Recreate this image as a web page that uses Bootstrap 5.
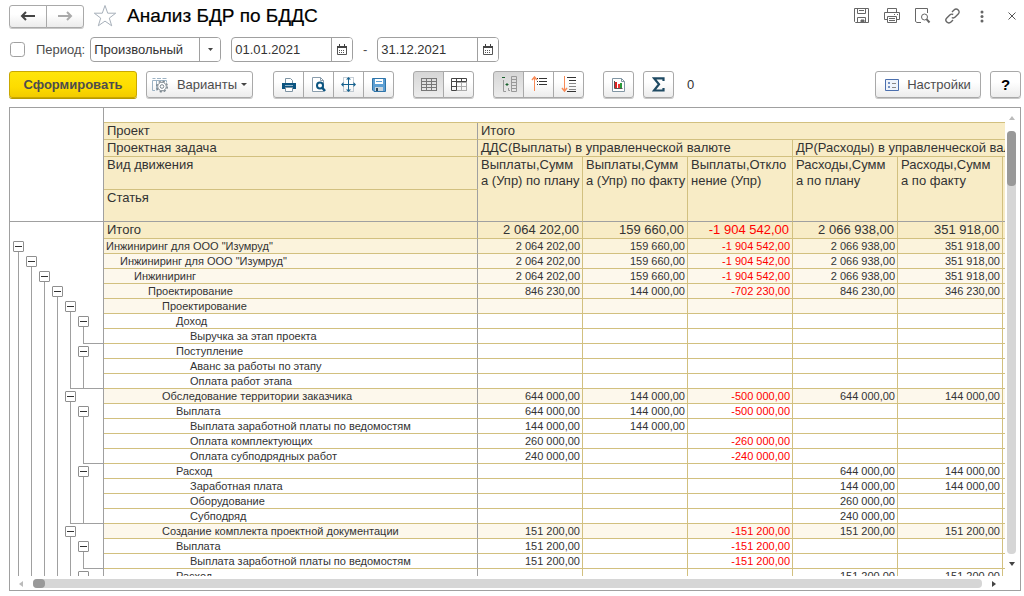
<!DOCTYPE html>
<html lang="ru">
<head>
<meta charset="utf-8">
<meta name="viewport" content="width=device-width, initial-scale=1">
<title>Анализ БДР по БДДС</title>
<link href="https://cdn.jsdelivr.net/npm/bootstrap@5.3.0/dist/css/bootstrap.min.css" rel="stylesheet">
<style>
  :root { --line: #a0a0a0; --sand: #d2c07f; --head: #f8ecc6; --lvl1: #fbf3dc; --lvl2: #fdf8ec; }
  body { font-family: "Liberation Sans", Arial, sans-serif; font-size: 13px; line-height: 16px; color: #4d4d4d; background: #fff; }
  svg { display: block; flex: none; }
  svg:not([fill]) { fill: none; }
  h1 { font-size: 19px; line-height: 24px; color: #000; margin: 0 0 0 7px; -webkit-text-stroke: .2px #000; }

  .title-row { padding: 4px 8px 0 9px; }
  .period-row { padding: 9px 3px 0 10px; }
  .tool-row { padding: 9px 3px 0 9px; }
  .frame-wrap { padding: 9px 3px 5px 9px; min-height: 0; }

  .tool { --bs-btn-color: #4d4d4d; --bs-btn-font-size: 13px; --bs-btn-line-height: 16px; --bs-btn-padding-x: 0; --bs-btn-padding-y: 0;
    --bs-btn-border-color: #a9a9a9; --bs-btn-border-radius: 3px; --bs-btn-hover-border-color: #8c8c8c; --bs-btn-hover-bg: #f0f0f0;
    display: inline-flex; align-items: center; justify-content: center; height: 27px; min-width: 31px;
    background: linear-gradient(#fff 40%, #ececec); box-shadow: 0 1px 0 #c8c8c8; }
  .btn-group > .tool { flex: none; }
  .tool.pressed { background: linear-gradient(#d6d6d6, #ececec); }
  .tool-wide { padding: 0 6px; }
  .tool-main { width: 128px; font-weight: bold; --bs-btn-border-color: #c9a800; background: linear-gradient(#ffe50a, #fddc00 60%, #f2cb00); box-shadow: 0 1px 0 #b79a00; }
  .nav-tool { width: 38px; height: 23px; }
  .plain { border: 0; background: none; padding: 0; width: 30px; display: flex; justify-content: center; }
  .star { margin-left: 6px; }
  .plain.close-tool { width: 8px; margin-left: 11px; }
  .variants { margin-left: 9px; width: 107px; }
  .set { margin-left: 20px; } .set + .set { margin-left: 19px; }
  .sum { margin-left: 9px; } .sum-value { margin-left: 13px; color: #333; }
  .settings { width: 106px; }
  .help { margin-left: 9px; color: #000; font-weight: bold; font-size: 15px; }

  .field { height: 25px; border: 1px solid var(--line); border-radius: 4px; background: #fff; overflow: hidden; }
  .field input, .field select { border: 0; outline: 0; background: none; appearance: none; padding: 0 0 0 3px; color: #333; width: 0; height: 23px; }
  .field .side { flex: none; width: 21px; border: 0; border-left: 1px solid var(--line); background: #fff; padding: 0; display: flex; align-items: center; justify-content: center; }
  .w-period { width: 131px; margin-left: 5px; } .w-date { width: 122px; }
  .date-from { margin-left: 10px; } .dash { width: 24px; text-align: center; }
  .tick { width: 15px; height: 15px; margin: 0; border: 1px solid var(--line); border-radius: 2px; }
  .tick-label { margin-left: 11px; }

  .report { border: 1px solid var(--line); }
  .sheet { table-layout: fixed; width: 1100px; border-collapse: separate; border-spacing: 0; color: #333; }
  .sheet th, .sheet td { padding: 0 3px; font-weight: normal; vertical-align: top; white-space: nowrap; border-right: 1px solid var(--sand); border-bottom: 1px solid var(--sand); }
  .sheet thead th { background: var(--head); line-height: 16px; }
  .sheet thead .gap-cell { background: #fff; border-right: 0; height: 15px; }
  .sheet .name, .sheet .gutter, .sheet thead .corner { border-right-color: var(--line); }
  .sheet thead .corner { background: #fff; border-bottom-color: var(--line); }
  .sheet .edge { border-bottom-color: var(--line); }
  .h-one { height: 17px; } .h-two { height: 33px; } .h-last { height: 32px; }
  .sheet tbody td, .sheet tbody th { font-size: 11px; line-height: 14px; }
  .sheet tbody .total td, .sheet tbody .total th { background: var(--head); font-size: 13px; line-height: 16px; }
  .sheet tbody .total .gutter { background: #fff; }
  .sheet tbody td.num { text-align: right; padding-right: 2px; }
  .sheet tbody .total td.num { padding-right: 3px; }
  .sheet .neg { color: #f00; }
  .sheet .l1 .name, .sheet .l1 .num { background: var(--lvl1); }
  .sheet .l2 .name, .sheet .l2 .num { background: var(--lvl2); }
  .sheet tbody .gutter { padding: 0 0 0 8px; border-bottom: 0; }
  .tree { display: flex; height: 15px; }
  .tree span { width: 13px; height: 15px; }
  .tree span:last-child { flex: 1; }
  .tree .run { background: linear-gradient(var(--line), var(--line)) left top / 1px 100% no-repeat; }
  .tree .open { background: linear-gradient(var(--line), var(--line)) left bottom / 1px 3px no-repeat; }
  .tree .shut { border-bottom: 1px solid var(--line); }
  .tree button { display: block; width: 11px; height: 11px; margin: 2px 0 0 -5px; padding: 0; border: 1px solid #8f8f8f; border-radius: 1px; background: linear-gradient(#333, #333) center / 7px 1px no-repeat, #fff; }

  .vbar { width: 15px; padding: 8px 4px 9px 2px; }
  .hbar { height: 14px; padding: 3px 24px 2px 9px; }
  .track { background: #d6d6d6; border-radius: 4px; }
  .thumb { background: #999; border-radius: 4px; }
  .vbar .track { width: 9px; margin: 10px 0 8px; } .vbar .thumb { height: 55px; }
  .hbar .track { height: 9px; margin: 0 10px; } .hbar .thumb { width: 12px; height: 9px; }
</style>
</head>
<body class="vh-100 d-flex flex-column overflow-hidden">

<header class="d-flex align-items-center title-row">
  <div class="btn-group" role="group" aria-label="Навигация">
    <button type="button" class="btn tool nav-tool" aria-label="Назад"><svg width="16" height="12" stroke="#444" stroke-width="2"><path d="M2 6h13M6 2 2 6l4 4"/></svg></button>
    <button type="button" class="btn tool nav-tool" aria-label="Вперёд"><svg width="16" height="12" stroke="#aaa" stroke-width="2"><path d="M1 6h13M10 2l4 4-4 4"/></svg></button>
  </div>
  <button type="button" class="plain star" aria-label="В избранное"><svg width="24" height="24" stroke="#a7b0ba"><path d="m12 1.500 2.700 7.700h8l-6.400 4.900 2.400 7.700-6.700-4.700-6.700 4.700 2.400-7.700L1.300 9.200h8z"/></svg></button>
  <h1>Анализ БДР по БДДС</h1>
  <div class="d-flex ms-auto align-items-center">
    <button type="button" class="plain" aria-label="Сохранить"><svg width="16" height="16" stroke="#666"><path d="M.5.5h14v14h-13l-1-1zM3.500.5v5h8v-5M5 2.500h5M3.500 14.500v-5h8v5"/><path d="M7 12h3v2H7z" fill="#666"/></svg></button>
    <button type="button" class="plain" aria-label="Печать"><svg width="18" height="16" stroke="#666"><path d="M4.500 4.500v-4h9v4M4 11.500H1.500v-7h15v7H14M4.500 8.500h9v6h-9zM6 10.500h6M6 12.500h6M11 6.500h1M14 6.500h1"/></svg></button>
    <button type="button" class="plain" aria-label="Просмотр"><svg width="17" height="16" stroke="#666"><path d="M7 14.500H3l-1.500-1V.5h12V5"/><circle cx="10.500" cy="9" r="3"/><path d="m12.500 11.200 3 3.300" stroke-width="2"/></svg></button>
    <button type="button" class="plain" aria-label="Ссылка"><svg width="17" height="16" stroke="#666" stroke-width="1.400"><path d="m8 4 2-2c1.300-1.300 3-1.200 4.200 0s1.300 2.800 0 4.100l-3 2.900c-1 1-2.400 1.100-3.400.5M9 12l-2 2c-1.300 1.300-3 1.200-4.200 0s-1.300-2.800 0-4.100l3-2.900C6.800 6 8.200 6 9.200 6.500"/></svg></button>
    <button type="button" class="plain" aria-label="Ещё"><svg width="4" height="13" fill="#666"><circle cx="2" cy="2" r="1.500"/><circle cx="2" cy="6.500" r="1.500"/><circle cx="2" cy="11" r="1.500"/></svg></button>
    <button type="button" class="plain close-tool" aria-label="Закрыть"><svg width="8" height="8" stroke="#555"><path d="m.5.5 7 7m0-7-7 7"/></svg></button>
  </div>
</header>

<form class="d-flex align-items-center period-row">
  <input class="form-check-input tick" type="checkbox" id="usePeriod">
  <label for="usePeriod" class="tick-label">Период:</label>
  <div class="field w-period d-flex">
    <select class="flex-grow-1" aria-label="Вид периода"><option>Произвольный</option></select>
    <span class="side"><svg width="5" height="3" fill="#444"><path d="M0 0h5L2.500 3z"/></svg></span>
  </div>
  <div class="field w-date d-flex date-from">
    <input class="flex-grow-1" type="text" value="01.01.2021" aria-label="Начало периода">
    <button type="button" class="side" aria-label="Выбрать дату начала"><svg width="10" height="11"><use href="#cal"/></svg></button>
  </div>
  <span class="dash">-</span>
  <div class="field w-date d-flex">
    <input class="flex-grow-1" type="text" value="31.12.2021" aria-label="Конец периода">
    <button type="button" class="side" aria-label="Выбрать дату конца"><svg width="10" height="11"><defs><g id="cal"><path d="M.5 2.500h9v8h-9z" stroke="#555"/><path d="M0 2h10v2H0zM2 0h1v2H2zM7 0h1v2H7z" fill="#444"/><path d="M2 6.500h6M2 8.500h6" stroke="#555" stroke-dasharray="1 1"/></g></defs><use href="#cal"/></svg></button>
  </div>
</form>

<div class="d-flex align-items-center tool-row">
  <button type="button" class="btn tool tool-main">Сформировать</button>
  <button type="button" class="btn tool tool-wide variants">
    <svg width="17" height="16" stroke="#9db3c4"><path d="M.5 3.500v10H3M.5 3.500h14v2M.5 1.500h3M5 1.500h4M10.500 1.500h4M4.500 3.500v10"/><circle cx="10" cy="9.500" r="5.300" stroke="#7b868e" stroke-width="1.400" stroke-dasharray="2.200 1.960"/><circle cx="10" cy="9.500" r="4.300" stroke="#7b868e" fill="#fff"/><circle cx="10" cy="9.500" r="1.800" stroke="#7b868e"/></svg>
    <span class="ms-2 me-1">Варианты</span>
    <svg width="6" height="3" fill="#444"><path d="M0 0h6L3 3z"/></svg>
  </button>
  <div class="btn-group set" role="group" aria-label="Документ">
    <button type="button" class="btn tool" aria-label="Печать"><svg width="14" height="14"><path d="M3.500 5V.500h5l2 2V5" fill="#fff" stroke="#7d93a3"/><path d="M0 5h14v6H0z" fill="#0b5480"/><path d="M3 7.500h8" stroke="#8fb4cc"/><path d="M3.500 9.500h7v4h-7z" fill="#fff" stroke="#7d93a3"/></svg></button>
    <button type="button" class="btn tool" aria-label="Предварительный просмотр"><svg width="14" height="15"><path d="M.5.5h8l3 3v11H.5z" fill="#fff" stroke="#8a9dac"/><path d="M8.500.5v3h3" stroke="#8a9dac"/><circle cx="8" cy="8.500" r="3" fill="#fff" stroke="#0b5480" stroke-width="2"/><path d="m10 10.500 3 3.500" stroke="#0b5480" stroke-width="2.500"/></svg></button>
    <button type="button" class="btn tool" aria-label="Масштаб"><svg width="15" height="15"><path d="M2.500.5h10v14h-10z" stroke="#8a9dac" stroke-dasharray="1 1"/><path d="M1 7.500h13M7.500 1v13" stroke="#16628f"/><path d="M0 7.500 2.500 5v5zM15 7.500 12.500 5v5zM7.500 0 5 2.500h5zM7.500 15 5 12.500h5z" fill="#16628f"/></svg></button>
    <button type="button" class="btn tool" aria-label="Сохранить"><svg width="14" height="14"><path d="M.5.5h13v13H2l-1.500-1.500z" fill="#5d9fd3" stroke="#2f74a8"/><path d="M3 1h8v5H3z" fill="#fff"/><path d="M4 3.500h6" stroke="#5d9fd3"/><path d="M3 9h8v4H3z" fill="#c9d5de"/><path d="M4 10h2v3H4z" fill="#2b4a60"/></svg></button>
  </div>
  <div class="btn-group set" role="group" aria-label="Закрепление">
    <button type="button" class="btn tool pressed" aria-label="Таблица"><svg width="16" height="13"><path d="M0 .5h16M0 3.500h16M0 6.500h16M0 9.500h16M0 12.500h16M.5 0v13M5.500 0v13M10.500 0v13M15.500 0v13" stroke="#777"/></svg></button>
    <button type="button" class="btn tool" aria-label="Закрепить шапку"><svg width="16" height="13"><path d="M6 4.500h10M6 8.500h10M10.500 4v9M15.500 4v9M6 12.500h10" stroke="#aaa"/><path d="M.5.5h15v3H.5zM.5 3.500h5v9H.5zM.5 8.500h5M5.500 .5v3M10.500.5v3" stroke="#444"/></svg></button>
  </div>
  <div class="btn-group set" role="group" aria-label="Группировки">
    <button type="button" class="btn tool pressed" aria-label="Показывать группировки"><svg width="16" height="17"><path d="M1 1.500h3M4.500 8.500h3M6 7v3" stroke="#17602b"/><path d="M2.500 4v11.500H5M7.500 12v2.500H9M10.500.5h5v15h-5zM10 3.500h5M10 6.500h5M10 9.500h5M10 12.500h5" stroke="#999"/></svg></button>
    <button type="button" class="btn tool" aria-label="Итоги сверху"><svg width="16" height="17"><path d="M3.500 1v14" stroke="#f98b57"/><path d="M1 4 3.500 1 6 4" stroke="#f98b57" stroke-width="1.500"/><path d="M6 2.500h1M6 5.500h1M6 8.500h1M8 2.500h8M8 5.500h8M8 8.500h8" stroke="#333"/></svg></button>
    <button type="button" class="btn tool" aria-label="Итоги снизу"><svg width="16" height="17"><path d="M3.500 0v14" stroke="#f98b57"/><path d="M1 12l2.500 3L6 12" stroke="#f98b57" stroke-width="1.500"/><path d="M6 1.500h9M8 4.500h7" stroke="#333"/><path d="M8 7.500h7M8 10.500h7M8 13.500h7" stroke="#888"/><path d="M6 15.500h9" stroke="#333"/></svg></button>
  </div>
  <button type="button" class="btn tool set" aria-label="Диаграмма"><svg width="13" height="14"><path d="M.5.5h9l3 3v10H.5z" fill="#fff" stroke="#8095a3"/><path d="M9.500.5v3h3" stroke="#8095a3"/><path d="M3 4h2v6H3z" fill="#d22"/><path d="M6 6h2v4H6z" fill="#e33"/><path d="M8 5h2v5H8z" fill="#2a9a3c"/><path d="M2.500 3v7.500h8" stroke="#555"/></svg></button>
  <button type="button" class="btn tool sum" aria-label="Сумма"><svg width="13" height="15" stroke="#1f4a63" stroke-width="2.200"><path d="M11.500 4V1.300H2l5 6-5 6.200h9.500V11"/></svg></button>
  <output class="sum-value">0</output>
  <button type="button" class="btn tool tool-wide ms-auto settings"><svg width="14" height="12" stroke="#4b6fae"><path d="M.5.5h13v11H.5z" fill="#eef3fb"/><path d="M3.500 3.500h1v1h-1zM3.500 7.500h1v1h-1z"/><path d="M7 4.500h4M7 8.500h4" stroke="#888"/></svg><span class="ms-2">Настройки</span></button>
  <button type="button" class="btn tool help" aria-label="Справка">?</button>
</div>

<main class="flex-grow-1 d-flex frame-wrap">
  <div class="report d-flex flex-column flex-grow-1 overflow-hidden">
    <div class="d-flex flex-grow-1 overflow-hidden">
      <div class="flex-grow-1 overflow-hidden">
        <table class="sheet">
          <colgroup><col style="width:94px"><col style="width:374px"><col span="5" style="width:105px"><col></colgroup>
          <thead>
            <tr><th class="corner" rowspan="5"></th><th class="gap-cell" colspan="7"></th></tr>
            <tr><th class="name h-one">Проект</th><th colspan="6">Итого</th></tr>
            <tr><th class="name h-one">Проектная задача</th><th colspan="3">ДДС(Выплаты) в управленческой валюте</th><th colspan="3">ДР(Расходы) в управленческой валюте</th></tr>
            <tr><th class="name h-two">Вид движения</th><th class="edge" rowspan="2">Выплаты,Сумм<br>а (Упр) по плану</th><th class="edge" rowspan="2">Выплаты,Сумм<br>а (Упр) по факту</th><th class="edge" rowspan="2">Выплаты,Откло<br>нение (Упр)</th><th class="edge" rowspan="2">Расходы,Сумм<br>а по плану</th><th class="edge" rowspan="2">Расходы,Сумм<br>а по факту</th><th class="edge" rowspan="2"></th></tr>
            <tr><th class="name edge h-last">Статья</th></tr>
          </thead>
          <tbody id="rows"></tbody>
        </table>
      </div>
      <div class="vbar d-flex flex-column align-items-center">
        <svg width="6" height="5" fill="#bbb"><path d="M3 0 6 4H0z"/></svg>
        <div class="track flex-grow-1"><div class="thumb"></div></div>
        <svg width="6" height="5" fill="#444"><path d="M0 0h6L3 4z"/></svg>
      </div>
    </div>
    <div class="hbar d-flex align-items-center">
      <svg width="4" height="6" fill="#bbb"><path d="M4 0v6L0 3z"/></svg>
      <div class="track flex-grow-1"><div class="thumb"></div></div>
      <svg width="4" height="6" fill="#444"><path d="M0 0v6l4-3z"/></svg>
    </div>
  </div>
</main>

<script src="https://cdn.jsdelivr.net/npm/bootstrap@5.3.0/dist/js/bootstrap.bundle.min.js"></script>
<script>
  // [level, caption, values, outermost group that ends on this row]
  const A = ['2 064 202,00', '159 660,00', '-1 904 542,00', '2 066 938,00', '351 918,00'];
  const data = [
    [0, 'Инжиниринг для ООО "Изумруд"', A],
    [1, 'Инжиниринг для ООО "Изумруд"', A],
    [2, 'Инжиниринг', A],
    [3, 'Проектирование', ['846 230,00', '144 000,00', '-702 230,00', '846 230,00', '346 230,00']],
    [4, 'Проектирование', []],
    [5, 'Доход', []],
    [6, 'Выручка за этап проекта', [], 5],
    [5, 'Поступление', []],
    [6, 'Аванс за работы по этапу', []],
    [6, 'Оплата работ этапа', [], 4],
    [4, 'Обследование территории заказчика', ['644 000,00', '144 000,00', '-500 000,00', '644 000,00', '144 000,00']],
    [5, 'Выплата', ['644 000,00', '144 000,00', '-500 000,00']],
    [6, 'Выплата заработной платы по ведомостям', ['144 000,00', '144 000,00']],
    [6, 'Оплата комплектующих', ['260 000,00', '', '-260 000,00']],
    [6, 'Оплата субподрядных работ', ['240 000,00', '', '-240 000,00'], 5],
    [5, 'Расход', ['', '', '', '644 000,00', '144 000,00']],
    [6, 'Заработная плата', ['', '', '', '144 000,00', '144 000,00']],
    [6, 'Оборудование', ['', '', '', '260 000,00']],
    [6, 'Субподряд', ['', '', '', '240 000,00'], 4],
    [4, 'Создание комплекта проектной документации', ['151 200,00', '', '-151 200,00', '151 200,00', '151 200,00']],
    [5, 'Выплата', ['151 200,00', '', '-151 200,00']],
    [6, 'Выплата заработной платы по ведомостям', ['151 200,00', '', '-151 200,00'], 5],
    [5, 'Расход', ['', '', '', '151 200,00', '151 200,00']]
  ];
  const nums = v => [0, 1, 2, 3, 4, 5].map(i => `<td class="num${(v[i] || '')[0] === '-' ? ' neg' : ''}">${v[i] || ''}</td>`).join('');
  const tree = (level, end) => {
    let out = '';
    for (let k = 0; k < 7; k++) {
      const shut = end !== undefined && k >= end ? ' shut' : '';
      if (k === level && k < 6) out += `<span class="open"><button type="button" aria-label="Свернуть"></button></span>`;
      else out += `<span class="${k < level && k < 6 ? 'run' : ''}${shut}"></span>`;
    }
    return `<div class="tree">${out}</div>`;
  };
  document.getElementById('rows').innerHTML =
    `<tr class="total"><td class="gutter"></td><th class="name">Итого</th>${nums(A)}</tr>` +
    data.map(([level, caption, values, end]) =>
      `<tr class="${level === 0 ? 'l1' : level < 5 ? 'l2' : ''}"><td class="gutter">${tree(level, end)}</td>` +
      `<th class="name" style="padding-left:${2 + level * 14}px">${caption}</th>${nums(values)}</tr>`).join('');
</script>
</body>
</html>
